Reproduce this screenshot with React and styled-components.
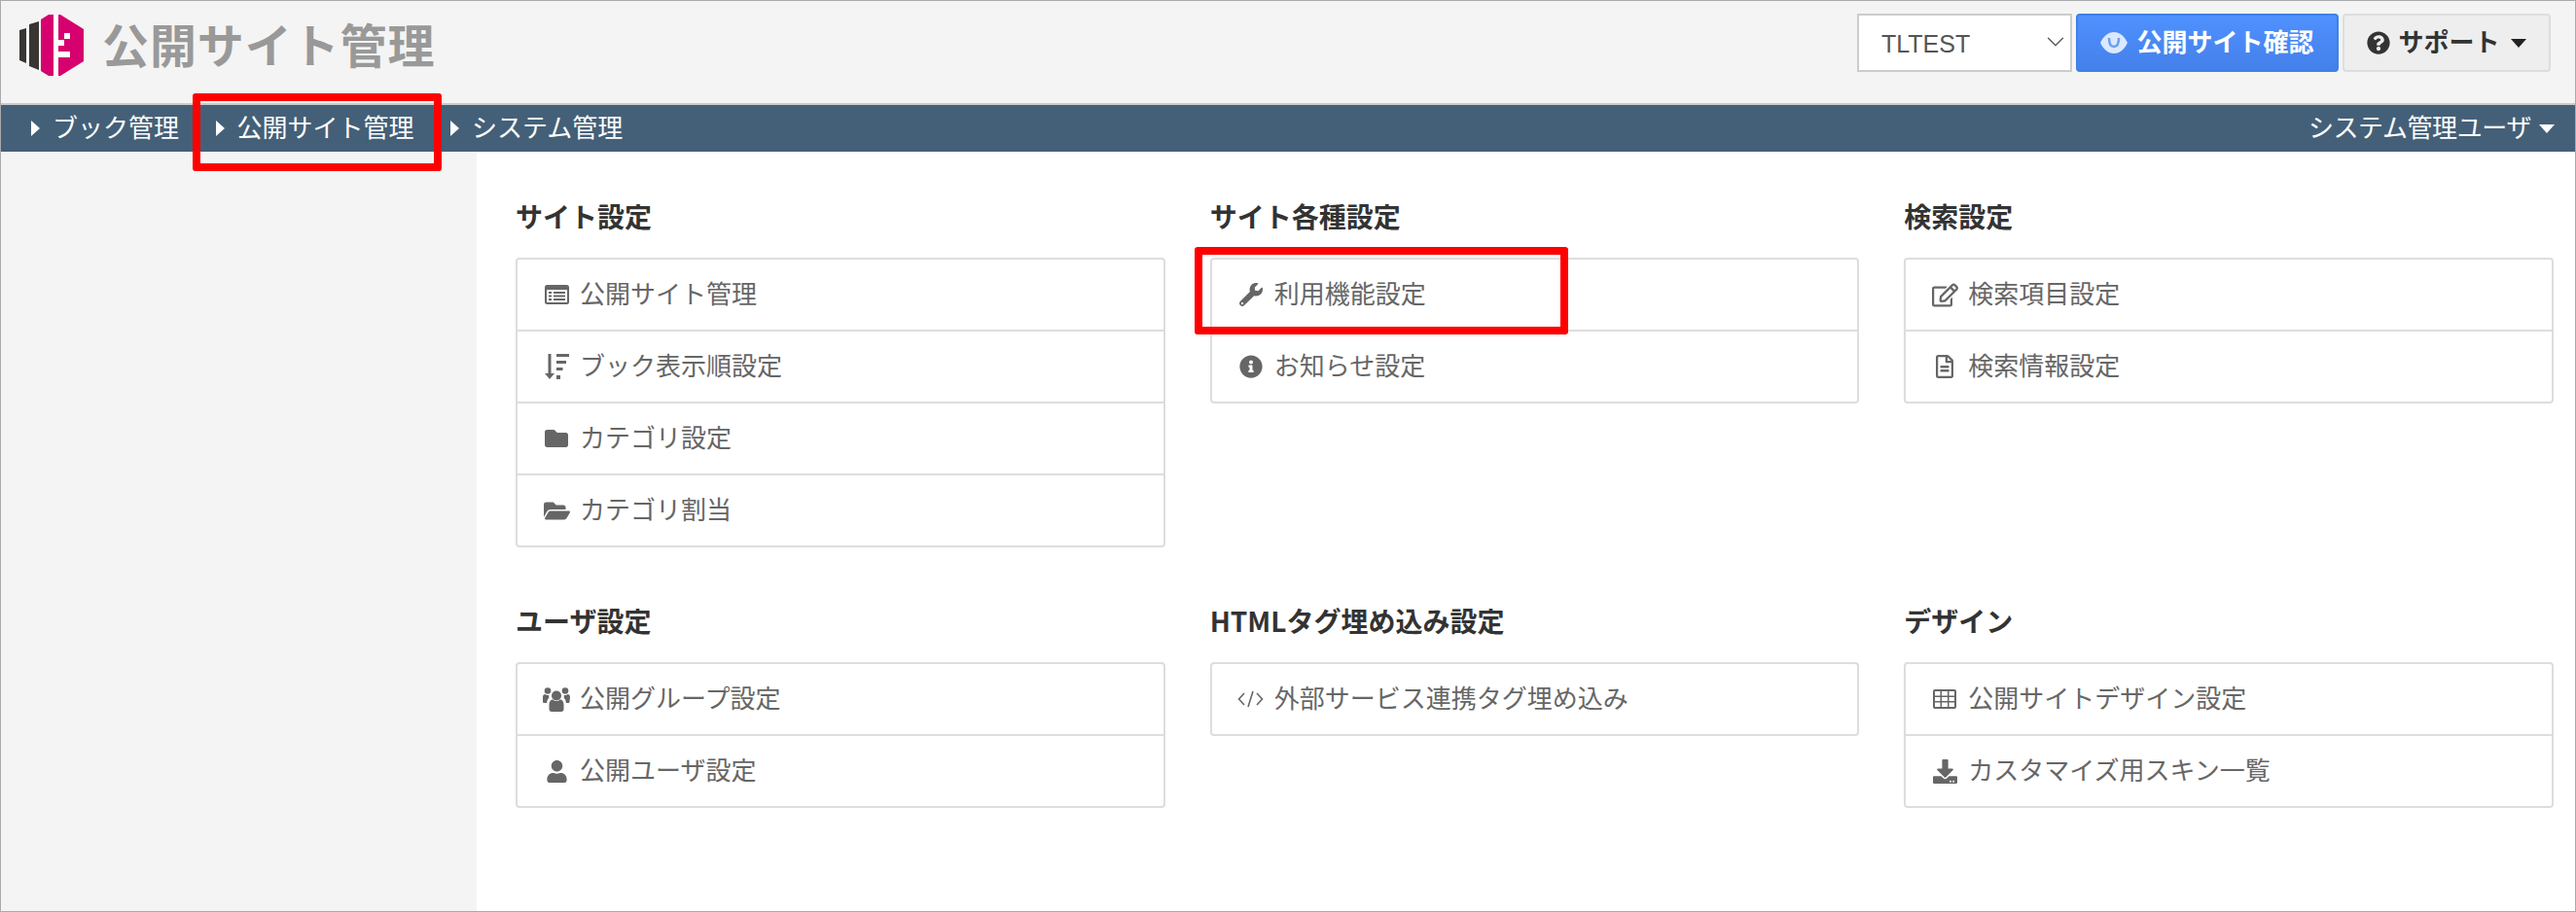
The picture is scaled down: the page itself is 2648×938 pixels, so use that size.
import React from 'react';
import styled, { createGlobalStyle } from 'styled-components';
import { ChevronDown } from 'lucide-react';
import {
  FaFolder, FaFolderOpen, FaWrench, FaInfoCircle, FaRegEdit,
  FaRegFileAlt, FaUser, FaDownload, FaQuestionCircle,
} from 'react-icons/fa';

const Global = createGlobalStyle`
  html, body { margin: 0; padding: 0; background: #fff; }
  body { font-family: "Noto Sans CJK JP", "Liberation Sans", sans-serif; }
  * { box-sizing: border-box; }
`;

const Page = styled.div`
  position: relative;
  width: 2648px;
  height: 938px;
  border: 1px solid #aaa;
  display: flex;
  flex-direction: column;
  overflow: hidden;
`;

const Header = styled.header`
  height: 107px;
  flex: none;
  background: #f4f4f4;
  border-bottom: 2px solid #ccc;
  display: flex;
  justify-content: space-between;
  align-items: flex-start;
  padding: 13px 25px 0 19px;
`;

const Brand = styled.div`
  display: flex;
  align-items: center;
  gap: 19px;
  height: 66px;
`;

const Title = styled.h1`
  margin: 0 0 6px;
  font-size: 48px;
  line-height: 60px;
  letter-spacing: 0.9px;
  font-weight: 700;
  color: #999;
`;

const Tools = styled.div`
  display: flex;
  gap: 4px;
`;

const SelectWrap = styled.div`
  position: relative;
  width: 221px;
  height: 60px;
`;

const Select = styled.select`
  appearance: none;
  width: 100%;
  height: 100%;
  padding: 2px 0 0 23px;
  background: #fff;
  border: 2px solid #ccc;
  border-radius: 0;
  color: #555;
  font-family: "Liberation Sans", sans-serif;
  font-size: 25px;
  outline: none;
`;

const SelectChevron = styled.span`
  position: absolute;
  right: 2px;
  top: 14px;
  display: flex;
  color: #555;
`;

const Button = styled.button`
  height: 60px;
  width: ${p => p.$width}px;
  display: flex;
  align-items: center;
  justify-content: center;
  gap: ${p => p.$iconGap}px;
  padding: 0;
  border-radius: 4px;
  font-family: inherit;
  font-size: 26px;
  font-weight: 700;
  color: ${p => (p.$primary ? '#fff' : '#333')};
  background: ${p => (p.$primary ? 'linear-gradient(#4f91ff, #4480ea)' : '#eee')};
  border: 2px solid ${p => (p.$primary ? '#3f80e8' : '#ddd')};
`;

const ButtonLabel = styled.span`
  margin-bottom: 6px;
`;

const Caret = styled.span`
  width: 0;
  height: 0;
  flex: none;
  border-left: 8px solid transparent;
  border-right: 8px solid transparent;
  border-top: 9px solid ${p => p.$color};
  margin-left: ${p => p.$gap}px;
`;

const Nav = styled.nav`
  height: 48px;
  flex: none;
  background: #446078;
  color: #fff;
  display: flex;
  justify-content: space-between;
  align-items: center;
  padding: 0 21px 0 31px;
  font-size: 26px;
`;

const NavList = styled.div`
  display: flex;
  gap: 37.5px;
`;

const NavItem = styled.a`
  display: flex;
  align-items: center;
  gap: 13px;
  height: 48px;
`;

const NavLabel = styled.span`
  margin-bottom: 5px;
`;

const NavUserLabel = styled(NavLabel)`
  letter-spacing: -0.4px;
`;

const NavArrow = styled.span`
  width: 0;
  height: 0;
  flex: none;
  border-top: 8px solid transparent;
  border-bottom: 8px solid transparent;
  border-left: 9px solid #fff;
`;

const NavUser = styled.a`
  display: flex;
  align-items: center;
  height: 48px;
`;

const Body = styled.div`
  flex: 1;
  display: flex;
  min-height: 0;
`;

const Sidebar = styled.aside`
  width: 489px;
  flex: none;
  background: #f4f4f4;
`;

const Main = styled.main`
  flex: 1;
  background: #fff;
  padding: 49px 22px 0 40px;
  display: grid;
  grid-template-columns: repeat(3, 1fr);
  column-gap: 46px;
  row-gap: 58px;
  align-content: start;
`;

const SectionTitle = styled.h2`
  margin: 0 0 26px;
  font-size: 28px;
  line-height: 34px;
  font-weight: 700;
  color: #333;
`;

const Card = styled.div`
  border: 2px solid #ddd;
  border-radius: 4px;
  background: #fff;
`;

const Row = styled.a`
  height: 74px;
  display: flex;
  align-items: center;
  padding: 0 0 0 26px;
  gap: 10px;
  color: #666;
  font-size: 26px;
  border-bottom: 2px solid #ddd;
  &:last-child { height: 72px; border-bottom: 0; }
`;

const RowLabel = styled.span`
  margin-bottom: 6px;
`;

const IconSlot = styled.span`
  width: 28px;
  display: flex;
  justify-content: center;
  flex: none;
  color: #666;
`;

const Highlight = styled.div`
  position: absolute;
  left: ${p => p.$x}px;
  top: ${p => p.$y}px;
  width: ${p => p.$w}px;
  height: ${p => p.$h}px;
  border: 8px solid #f00;
  border-radius: 3px;
`;

const Logo = () => (
  <svg width="66" height="64" viewBox="0 0 66 64" aria-hidden="true">
    <path fill="#3a3533" d="M0 16l7-2v36l-7-3zM10 10l10-3v50l-10-4z" />
    <path fill="#d6006e" d="M22 5l8-5h12l24 15v33L42 63H30l-8-5z" />
    <path fill="#fff" d="M35 0h5v26h6v-7h6v6h-6v7h-6v6h12v6h-12v20h-5z" />
  </svg>
);

const ListAlt = ({ size }) => (
  <svg width={size} height={size * 0.8} viewBox="0 0 25 20" aria-hidden="true">
    <path fill="currentColor" fillRule="evenodd" d="M2.500 0h20A2.500 2.500 0 0 1 25 2.500v15a2.500 2.500 0 0 1-2.500 2.500h-20A2.500 2.500 0 0 1 0 17.500v-15A2.500 2.500 0 0 1 2.500 0zM2 5v12.500c0 .3.200.5.500.5h20c.3 0 .5-.2.5-.5V5z" />
    <path fill="currentColor" d="M4 7h3v2H4zM9 7h12v2H9zM4 10.500h3v2H4zM9 10.500h12v2H9zM4 14h3v2H4zM9 14h12v2H9z" />
  </svg>
);

const SortDesc = ({ size }) => (
  <svg width={size} height={size * 26 / 25} viewBox="0 0 25 26" fill="currentColor" aria-hidden="true">
    <path d="M3.500 0h3v20h3.500L5 26 0 20h3.500z" />
    <path d="M12 0h13v3H12zM12 7h10v3H12zM12 14h6.500v3H12zM12 22h4v4h-4z" />
  </svg>
);

const Users = ({ size }) => (
  <svg width={size} height={size * 25 / 28} viewBox="0 0 28 25" fill="currentColor" aria-hidden="true">
    <circle cx="14" cy="8.500" r="5" />
    <circle cx="5" cy="3.500" r="3.300" />
    <circle cx="23" cy="3.500" r="3.300" />
    <path d="M6.500 18c0-4 2-5.500 4-5.500 1 1 2 1.500 3.500 1.500s2.500-.5 3.500-1.500c2 0 4 1.500 4 5.500v4.500c0 1.500-1 2.500-2.500 2.500H9c-1.500 0-2.500-1-2.500-2.500z" />
    <path d="M0 10c0-2 1-3 2.500-3 .8.800 1.600 1 2.500 1 .6 0 1 0 1.400-.2-.3 1-.3 2-.1 3-1.200 1-2 2.700-2.200 5.200H1.500C.5 16 0 15.500 0 14.500zM28 10c0-2-1-3-2.500-3-.8.800-1.600 1-2.500 1-.6 0-1 0-1.400-.2.300 1 .3 2 .1 3 1.200 1 2 2.700 2.200 5.200h2.100c1 0 1.500-.5 1.500-1.500z" />
  </svg>
);

const CodeTag = ({ size }) => (
  <svg width={size} height={size * 18 / 27} viewBox="0 0 27 18" fill="none" stroke="currentColor" strokeWidth="1.600" aria-hidden="true">
    <path d="M7 3L1.500 9 7 15M20 3l5.500 6-5.500 6M16 1l-5 16" />
  </svg>
);

const Grid = ({ size }) => (
  <svg width={size} height={size * 20 / 24} viewBox="0 0 24 20" aria-hidden="true">
    <path fill="currentColor" fillRule="evenodd" d="M2 0h20a2 2 0 0 1 2 2v16a2 2 0 0 1-2 2H2a2 2 0 0 1-2-2V2a2 2 0 0 1 2-2zM2 2v4.500h5.500V2zM9 2v4.500h6V2zM16.500 2v4.500H22V2zM2 8v4h5.500V8zM9 8v4h6V8zM16.500 8v4H22V8zM2 13.500V18h5.500v-4.500zM9 13.500V18h6v-4.500zM16.500 13.500V18H22v-4.500z" />
  </svg>
);

const Eye = () => (
  <svg width="28" height="24" viewBox="0 0 28 24" aria-hidden="true">
    <path fill="#dbe8ff" d="M14 1c6 0 11 4.500 14 11-3 6.500-8 11-14 11S3 18.500 0 12C3 5.500 8 1 14 1z" />
    <path fill="none" stroke="#6c9ff0" strokeWidth="2.500" d="M9 7c0 6 2 9 5 9s5-3 5-9" />
  </svg>
);

const sections = [
  { title: 'サイト設定', items: [
    { icon: ListAlt, size: 25, label: '公開サイト管理' },
    { icon: SortDesc, size: 25, label: 'ブック表示順設定' },
    { icon: FaFolder, size: 24, label: 'カテゴリ設定' },
    { icon: FaFolderOpen, size: 27, label: 'カテゴリ割当' },
  ] },
  { title: 'サイト各種設定', items: [
    { icon: FaWrench, size: 24, label: '利用機能設定' },
    { icon: FaInfoCircle, size: 24, label: 'お知らせ設定' },
  ] },
  { title: '検索設定', items: [
    { icon: FaRegEdit, size: 27, label: '検索項目設定' },
    { icon: FaRegFileAlt, size: 24, label: '検索情報設定' },
  ] },
  { title: 'ユーザ設定', items: [
    { icon: Users, size: 28, label: '公開グループ設定' },
    { icon: FaUser, size: 23, label: '公開ユーザ設定' },
  ] },
  { title: 'HTMLタグ埋め込み設定', items: [
    { icon: CodeTag, size: 27, label: '外部サービス連携タグ埋め込み' },
  ] },
  { title: 'デザイン', items: [
    { icon: Grid, size: 24, label: '公開サイトデザイン設定' },
    { icon: FaDownload, size: 25, label: 'カスタマイズ用スキン一覧' },
  ] },
];

const navItems = ['ブック管理', '公開サイト管理', 'システム管理'];

export default function App() {
  return (
    <Page>
      <Global />
      <Header>
        <Brand>
          <Logo />
          <Title>公開サイト管理</Title>
        </Brand>
        <Tools>
          <SelectWrap>
            <Select defaultValue="TLTEST"><option>TLTEST</option></Select>
            <SelectChevron><ChevronDown size={30} strokeWidth={1} /></SelectChevron>
          </SelectWrap>
          <Button $primary $width={270} $iconGap={9}><Eye /><ButtonLabel>公開サイト確認</ButtonLabel></Button>
          <Button $width={214} $iconGap={8}>
            <FaQuestionCircle size={24} color="#333" /><ButtonLabel>サポート</ButtonLabel><Caret $color="#222" $gap={3} />
          </Button>
        </Tools>
      </Header>
      <Nav>
        <NavList>
          {navItems.map(t => (
            <NavItem key={t}><NavArrow /><NavLabel>{t}</NavLabel></NavItem>
          ))}
        </NavList>
        <NavUser><NavUserLabel>システム管理ユーザ</NavUserLabel><Caret $color="#fff" $gap={8} /></NavUser>
      </Nav>
      <Body>
        <Sidebar />
        <Main>
          {sections.map(s => (
            <section key={s.title}>
              <SectionTitle>{s.title}</SectionTitle>
              <Card>
                {s.items.map(({ icon: Icon, size, label }) => (
                  <Row key={label}>
                    <IconSlot><Icon size={size} /></IconSlot>
                    <RowLabel>{label}</RowLabel>
                  </Row>
                ))}
              </Card>
            </section>
          ))}
        </Main>
      </Body>
      <Highlight $x={197} $y={95} $w={256} $h={80} />
      <Highlight $x={1227} $y={253} $w={384} $h={90} />
    </Page>
  );
}
